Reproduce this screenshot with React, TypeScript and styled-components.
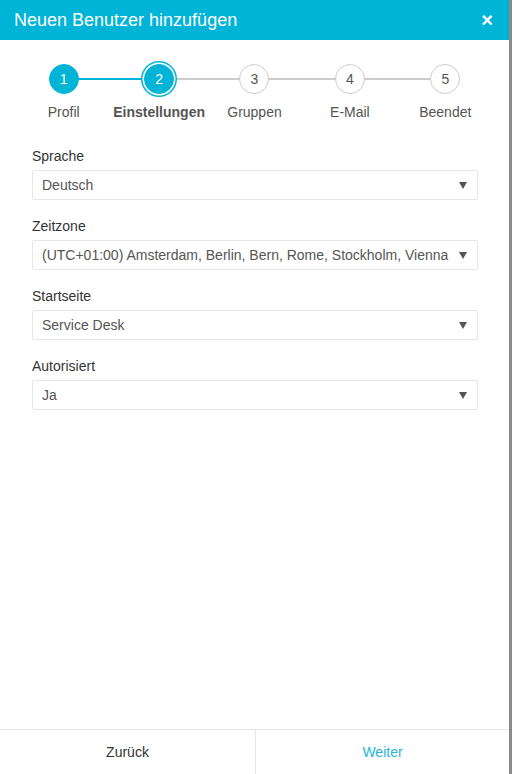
import React from "react";
import styled, { createGlobalStyle } from "styled-components";

const Global = createGlobalStyle`
  html, body { margin: 0; padding: 0; }
  body { font-family: "Liberation Sans", Arial, sans-serif; background: #8c8c8c; }
  * { box-sizing: border-box; }
`;

const CYAN = "#00b4d8";

const Page = styled.div`
  display: flex;
  width: 512px;
  height: 774px;
`;

const Dialog = styled.div`
  width: 509px;
  height: 774px;
  background: #fff;
  display: flex;
  flex-direction: column;
`;

const Edge = styled.div`
  flex: 1;
  background: #8a8a8a;
`;

const Header = styled.div`
  height: 40px;
  background: ${CYAN};
  display: flex;
  align-items: center;
  justify-content: space-between;
  padding: 0 16px 0 14px;
`;

const Title = styled.h1`
  margin: 0;
  font-size: 18px;
  font-weight: normal;
  color: #fff;
  line-height: 20px;
`;

const Close = styled.button`
  border: none;
  background: none;
  padding: 0;
  color: #fff;
  font-family: "Liberation Sans", Arial, sans-serif;
  font-size: 20px;
  font-weight: bold;
  line-height: 20px;
  cursor: pointer;
`;

const Stepper = styled.div`
  display: grid;
  grid-template-columns: repeat(5, 1fr);
  padding: 24px 16px 0;
`;

const Step = styled.div`
  position: relative;
  display: flex;
  flex-direction: column;
  align-items: center;
`;

const Connector = styled.div<{ $active: boolean }>`
  position: absolute;
  top: 14px;
  left: 50%;
  width: 100%;
  height: 2px;
  background: ${(p) => (p.$active ? CYAN : "#cccccc")};
`;

const Circle = styled.div<{ $state: "done" | "current" | "todo" }>`
  position: relative;
  z-index: 1;
  width: 30px;
  height: 30px;
  border-radius: 50%;
  display: flex;
  align-items: center;
  justify-content: center;
  font-size: 14px;
  background: ${(p) => (p.$state === "todo" ? "#fff" : CYAN)};
  color: ${(p) => (p.$state === "todo" ? "#555" : "#fff")};
  border: 1px solid ${(p) => (p.$state === "todo" ? "#cccccc" : CYAN)};
  box-shadow: ${(p) =>
    p.$state === "current" ? `0 0 0 1.5px #fff, 0 0 0 3px ${CYAN}` : "none"};
`;

const StepLabel = styled.div<{ $bold: boolean }>`
  margin-top: 10px;
  font-size: 14px;
  line-height: 16px;
  color: #555;
  font-weight: ${(p) => (p.$bold ? "bold" : "normal")};
`;

const Form = styled.div`
  flex: 1;
  padding: 26px 31px 0 32px;
  display: flex;
  flex-direction: column;
  gap: 16px;
`;

const Field = styled.div`
  display: flex;
  flex-direction: column;
  gap: 4px;
`;

const Label = styled.label`
  font-size: 14px;
  line-height: 20px;
  color: #333;
`;

const Select = styled.div`
  height: 30px;
  border: 1px solid #e6e6e6;
  border-radius: 2px;
  display: flex;
  align-items: center;
  padding: 0 10px 0 9px;
  font-size: 14px;
  color: #555;
  white-space: nowrap;
  overflow: hidden;
`;

const Value = styled.span`
  flex: 1;
  overflow: hidden;
`;

const Arrow = styled.span`
  width: 0;
  height: 0;
  margin-left: 6px;
  border-left: 4.5px solid transparent;
  border-right: 4.5px solid transparent;
  border-top: 7px solid #555;
`;

const Footer = styled.div`
  height: 45px;
  border-top: 1px solid #e6e6e6;
  display: grid;
  grid-template-columns: 255px 1fr;
`;

const FooterButton = styled.button<{ $primary?: boolean }>`
  border: none;
  background: #fff;
  font-family: "Liberation Sans", Arial, sans-serif;
  font-size: 14px;
  color: ${(p) => (p.$primary ? "#27b4e0" : "#333")};
  border-left: ${(p) => (p.$primary ? "1px solid #e6e6e6" : "none")};
  cursor: pointer;
`;

const steps = ["Profil", "Einstellungen", "Gruppen", "E-Mail", "Beendet"];
const current = 1;

const fields = [
  { label: "Sprache", value: "Deutsch" },
  { label: "Zeitzone", value: "(UTC+01:00) Amsterdam, Berlin, Bern, Rome, Stockholm, Vienna" },
  { label: "Startseite", value: "Service Desk" },
  { label: "Autorisiert", value: "Ja" },
];

export default function App() {
  return (
    <Page>
      <Global />
      <Dialog>
        <Header>
          <Title>Neuen Benutzer hinzufügen</Title>
          <Close aria-label="Schließen">×</Close>
        </Header>
        <Stepper>
          {steps.map((s, i) => (
            <Step key={s}>
              {i < steps.length - 1 && <Connector $active={i < current} />}
              <Circle $state={i < current ? "done" : i === current ? "current" : "todo"}>
                {i + 1}
              </Circle>
              <StepLabel $bold={i === current}>{s}</StepLabel>
            </Step>
          ))}
        </Stepper>
        <Form>
          {fields.map((f) => (
            <Field key={f.label}>
              <Label>{f.label}</Label>
              <Select>
                <Value>{f.value}</Value>
                <Arrow />
              </Select>
            </Field>
          ))}
        </Form>
        <Footer>
          <FooterButton>Zurück</FooterButton>
          <FooterButton $primary>Weiter</FooterButton>
        </Footer>
      </Dialog>
      <Edge />
    </Page>
  );
}
